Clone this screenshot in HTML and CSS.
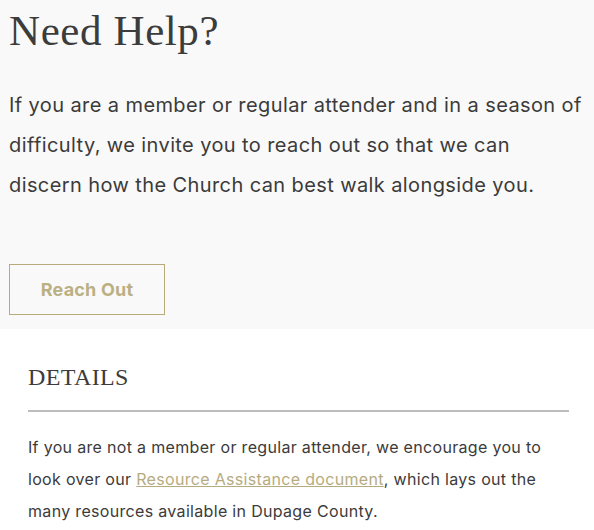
FILE: index.html
```html
<!DOCTYPE html>
<html lang="en">
<head>
<meta charset="utf-8">
<title>Need Help?</title>
<link rel="stylesheet" href="styles.css">
</head>
<body>
  <section class="help">
    <h1 class="help-title">Need Help?</h1>
    <p class="help-text">If you are a member or regular attender and in a season of difficulty, we invite you to reach out so that we can discern how the Church can best walk alongside you.</p>
    <a class="btn-outline" href="#">Reach Out</a>
  </section>
  <section class="details">
    <h2 class="details-title">DETAILS</h2>
    <p class="details-text">If you are not a member or regular attender, we encourage you to look over our <a class="link" href="#">Resource Assistance document</a>, which lays out the many resources available in Dupage County.</p>
  </section>
</body>
</html>
```

FILE: styles.css
```css
html, body {
  margin: 0;
  padding: 0;
  background: #ffffff;
}

body {
  font-family: Inter, "Open Sans", sans-serif;
  color: #3b3b3b;
}

.help {
  background: #f9f9f9;
  padding: 3px 9px 14px 9px;
  display: flex;
  flex-direction: column;
  align-items: flex-start;
}

.help-title {
  margin: 0;
  font-family: "Liberation Serif", serif;
  font-weight: 400;
  font-size: 43px;
  line-height: 56px;
  color: #3c3c3c;
  letter-spacing: 0.6px;
}

.help-text {
  margin: 26px 0 0 0;
  font-size: 20px;
  line-height: 40px;
  letter-spacing: 0.4px;
  color: #3b3b3b;
}

.btn-outline {
  margin-top: 59px;
  box-sizing: border-box;
  width: 156px;
  height: 51px;
  border: 1px solid #b8ab7a;
  display: flex;
  align-items: center;
  justify-content: center;
  font-size: 18px;
  font-weight: 700;
  letter-spacing: 0.2px;
  color: #bbb084;
  text-decoration: none;
}

.details {
  padding: 34px 25px 0 28px;
}

.details-title {
  margin: 0;
  padding-bottom: 19px;
  border-bottom: 2px solid #bdbdbd;
  font-family: "Liberation Serif", serif;
  font-weight: 400;
  font-size: 24px;
  line-height: 28px;
  letter-spacing: 0.4px;
  color: #3c3c3c;
}

.details-text {
  margin: 19px 0 0 0;
  font-size: 16px;
  line-height: 32px;
  letter-spacing: 0.32px;
  color: #3b3b3b;
}

.link {
  color: #b6ab7f;
  text-decoration: underline;
}
```
